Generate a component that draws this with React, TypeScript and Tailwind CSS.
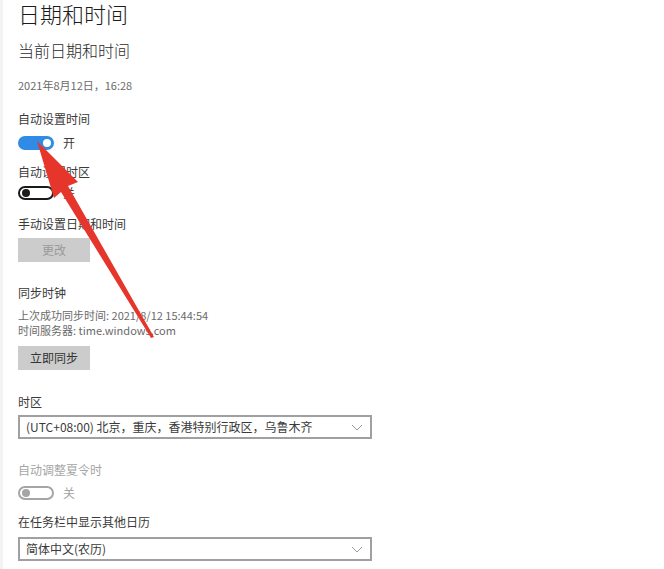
import React from "react";

const font = { fontFamily: '"Noto Sans CJK SC", "Noto Sans", sans-serif' };

function Chevron() {
  return (
    <svg width="12" height="7" viewBox="0 0 12 7" className="mr-[7px]">
      <path d="M1 1 L6 6 L11 1" fill="none" stroke="#9a9a9a" strokeWidth="1" />
    </svg>
  );
}

function Select({ text }: { text: string }) {
  return (
    <div className="mt-[6px] h-[24px] w-[354px] border-2 border-[#a0a0a0] flex items-center justify-between pl-[6px] text-[12px] text-[#3a3a3a]">
      <span>{text}</span>
      <Chevron />
    </div>
  );
}

export default function App() {
  return (
    <div
      className="relative w-[664px] h-[569px] bg-white overflow-hidden border-l-[3px] border-[#f3f3f3]"
      style={font}
    >
      <div className="flex flex-col pl-[15px]">
        <div className="h-[26px] flex items-center text-[22px] font-light text-[#1b1b1b] leading-none">日期和时间</div>
        <div className="mt-[14px] h-[20px] flex items-center text-[16px] font-light text-[#2b2b2b] leading-none">当前日期和时间</div>
        <div className="mt-[18px] h-[14px] flex items-center text-[11px] text-[#6a6a6a] leading-none">2021年8月12日，16:28</div>

        <div className="mt-[20px] h-[14px] flex items-center text-[12px] text-[#3a3a3a] leading-none">自动设置时间</div>
        <div className="mt-[10px] h-[14px] flex items-center gap-[9px]">
          <div className="w-[36px] h-[14px] rounded-full bg-[#2f8be6] flex items-center justify-end pr-[3px]">
            <div className="w-[8px] h-[8px] rounded-full bg-white" />
          </div>
          <span className="text-[12px] text-[#3a3a3a] leading-none">开</span>
        </div>

        <div className="mt-[15px] h-[14px] flex items-center text-[12px] text-[#3a3a3a] leading-none">自动设置时区</div>
        <div className="mt-[7px] h-[14px] flex items-center gap-[9px]">
          <div className="w-[36px] h-[14px] rounded-full border-2 border-[#1a1a1a] flex items-center pl-[2px]">
            <div className="w-[8px] h-[8px] rounded-full bg-[#1a1a1a]" />
          </div>
          <span className="text-[12px] text-[#3a3a3a] leading-none">关</span>
        </div>

        <div className="mt-[17px] h-[14px] flex items-center text-[12px] text-[#3a3a3a] leading-none">手动设置日期和时间</div>
        <div className="mt-[7px] h-[24px] w-[72px] bg-[#cccccc] flex items-center justify-center text-[12px] text-[#9a9a9a]">更改</div>

        <div className="mt-[24px] h-[14px] flex items-center text-[12px] text-[#3a3a3a] leading-none">同步时钟</div>
        <div className="mt-[8px] h-[14px] flex items-center text-[11px] text-[#6a6a6a] leading-none">上次成功同步时间: 2021/8/12 15:44:54</div>
        <div className="mt-[1px] h-[14px] flex items-center text-[11px] text-[#6a6a6a] leading-none">时间服务器: time.windows.com</div>
        <div className="mt-[9px] h-[24px] w-[72px] bg-[#cccccc] flex items-center justify-center text-[12px] text-[#333]">立即同步</div>

        <div className="mt-[25px] h-[14px] flex items-center text-[12px] text-[#3a3a3a] leading-none">时区</div>
        <Select text="(UTC+08:00) 北京，重庆，香港特别行政区，乌鲁木齐" />

        <div className="mt-[24px] h-[14px] flex items-center text-[12px] text-[#a5a5a5] leading-none">自动调整夏令时</div>
        <div className="mt-[9px] h-[14px] flex items-center gap-[9px]">
          <div className="w-[36px] h-[14px] rounded-full border-2 border-[#a5a5a5] flex items-center pl-[2px]">
            <div className="w-[8px] h-[8px] rounded-full bg-[#a5a5a5]" />
          </div>
          <span className="text-[12px] text-[#a5a5a5] leading-none">关</span>
        </div>

        <div className="mt-[15px] h-[14px] flex items-center text-[12px] text-[#3a3a3a] leading-none">在任务栏中显示其他日历</div>
        <div className="mt-[2px]">
          <Select text="简体中文(农历)" />
        </div>
      </div>

      <svg
        className="absolute left-0 top-0 pointer-events-none"
        width="664"
        height="569"
        viewBox="0 0 664 569"
      >
        <polygon
          points="34,141 75,182 65,186 151,337 148,338 58,192 51,198"
          fill="#e6352b"
        />
      </svg>
    </div>
  );
}
